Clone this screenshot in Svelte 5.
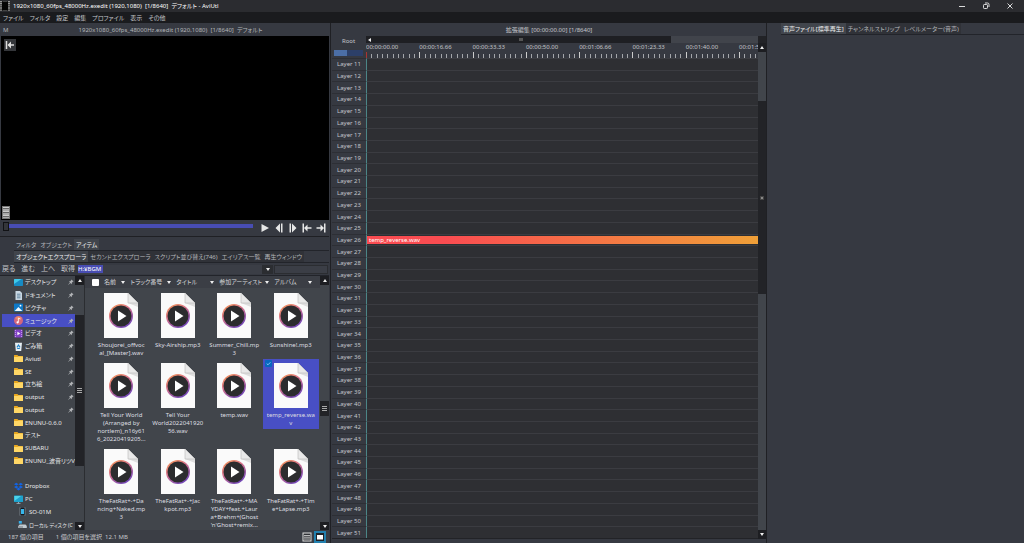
<script lang="ts">
	interface Place {
		name: string;
		icon: string;
		pinned?: boolean;
		child?: boolean;
	}

	const menus = ['ファイル', 'フィルタ', '設定', '編集', 'プロファイル', '表示', 'その他'];
	const topTabs = ['フィルタ', 'オブジェクト', 'アイテム'];
	const subTabs = ['オブジェクトエクスプローラ', 'セカンドエクスプローラ', 'スクリプト並び替え(746)', 'エイリアス一覧', '再生ウィンドウ'];
	const audioTabs = ['音声ファイル[標準再生]', 'チャンネルストリップ', 'レベルメーター(音声)'];
	const columns = ['名前', 'トラック番号', 'タイトル', '参加アーティスト', 'アルバム'];

	const places: Place[] = [
		{ name: 'デスクトップ', icon: 'desktop', pinned: true },
		{ name: 'ドキュメント', icon: 'document', pinned: true },
		{ name: 'ピクチャ', icon: 'picture', pinned: true },
		{ name: 'ミュージック', icon: 'music', pinned: true },
		{ name: 'ビデオ', icon: 'video', pinned: true },
		{ name: 'ごみ箱', icon: 'trash', pinned: true },
		{ name: 'Aviutl', icon: 'folder', pinned: true },
		{ name: 'SE', icon: 'folder', pinned: true },
		{ name: '立ち絵', icon: 'folder', pinned: true },
		{ name: 'output', icon: 'folder', pinned: true },
		{ name: 'output', icon: 'folder', pinned: true },
		{ name: 'ENUNU-0.6.0', icon: 'folder' },
		{ name: 'テスト', icon: 'folder' },
		{ name: 'SUBARU', icon: 'folder' },
		{ name: 'ENUNU_波音リツV', icon: 'folder' },
		{ name: '', icon: '' },
		{ name: 'Dropbox', icon: 'dropbox' },
		{ name: 'PC', icon: 'pc' },
		{ name: 'SO-01M', icon: 'phone', child: true },
		{ name: 'ローカル ディスク (C', icon: 'disk', child: true }
	];

	// Names are stored already wrapped, one entry per line
	const files = [
		['Shoujorei_offvoc', 'al_[Master].wav'],
		['Sky-Airship.mp3'],
		['Summer_Chill.mp', '3'],
		['Sunshine!.mp3'],
		['Tell Your World', '(Arranged by', 'nortlem)_n16y61', '6_20220419205...'],
		['Tell Your', 'World2022041920', '56.wav'],
		['temp.wav'],
		['temp_reverse.wa', 'v'],
		['TheFatRat+-+Da', 'ncing+Naked.mp', '3'],
		['TheFatRat+-+Jac', 'kpot.mp3'],
		['TheFatRat+-+MA', 'YDAY+feat.+Laur', 'a+Brehm+(Ghost', "'n'Ghost+remix..."],
		['TheFatRat+-+Tim', 'e+Lapse.mp3']
	];

	const times = ['00:00:00.00', '00:00:16.66', '00:00:33.33', '00:00:50.00', '00:01:06.66', '00:01:23.33', '00:01:40.00', '00:01:5'];
	const layers = Array.from({ length: 41 }, (_, i) => i + 11);

	let topTab = $state(2);
	let subTab = $state(0);
	let audioTab = $state(0);
	let place = $state(3);
	let selected = $state(7);
	let frame = $state(0);
	let path = $state('H:¥BGM');
	let search = $state('');
	let allChecked = $state(false);
</script>

{#snippet placeIcon(kind: string)}
	<svg class="place-icon" viewBox="0 0 9 9" aria-hidden="true">
		{#if kind === 'folder'}
			<path d="M0 1.5Q0 1 .5 1H3.4L4.4 2H8.4Q9 2 9 2.6V7.5Q9 8 8.4 8H.6Q0 8 0 7.5Z" fill="#e9a820" />
			<path d="M0 3H3.6L4.6 2.6H9V7.5Q9 8 8.4 8H.6Q0 8 0 7.5Z" fill="#ffd766" />
		{:else if kind === 'desktop'}
			<rect y="1" width="9" height="7" rx=".7" fill="#168bc4" />
			<path d="M0 6 7.5 1H.7Q0 1 0 1.7Z" fill="#3fc9ea" />
		{:else if kind === 'document'}
			<path d="M1.5 0H6L8 2V9H1.5Z" fill="#c9d7e2" />
			<path d="M3 3.2H6.5M3 5H6.5M3 6.8H6.5" stroke="#5b7f9b" stroke-width=".9" />
		{:else if kind === 'picture'}
			<rect y=".5" width="9" height="8" rx=".7" fill="#0e79c6" />
			<path d="M.6 8 4.4 4 8.4 8Z" fill="#eef8ff" />
			<circle cx="6.5" cy="2.7" r=".9" fill="#fff" />
		{:else if kind === 'music'}
			<circle cx="4.5" cy="4.5" r="4.5" fill="#d4667c" />
			<path d="M1 2A4.5 4.5 0 0 1 8 2L4.5 5Z" fill="#ef8f68" opacity=".8" />
			<path d="M4.4 6.3V2L6.4 3" fill="none" stroke="#fff" stroke-width=".8" />
			<circle cx="3.6" cy="6.3" r="1.1" fill="#fff" />
		{:else if kind === 'video'}
			<rect x=".5" y=".5" width="8" height="8" rx=".6" fill="#8142c5" />
			<path d="M1.4 1V8M7.6 1V8" stroke="#d2aaf6" stroke-width=".9" stroke-dasharray="1 1" />
			<path d="M3.4 2.7 6.3 4.5 3.4 6.3Z" fill="#fff" />
		{:else if kind === 'trash'}
			<path d="M1 .7H8L7.2 9H1.8Z" fill="#e5edf2" />
			<path d="M3 5.4 4.5 3 6 5.4M3.2 6.5H5.8" fill="none" stroke="#1b80c9" stroke-width="1.1" />
		{:else if kind === 'dropbox'}
			<path d="M2.3 .8 4.5 2.2 2.3 3.6 0 2.2ZM6.7 .8 9 2.2 6.7 3.6 4.5 2.2ZM2.3 3.8 4.5 5.1 2.3 6.5 0 5.1ZM6.7 3.8 9 5.1 6.7 6.5 4.5 5.1ZM4.5 5.7 6.7 7.1 4.5 8.5 2.3 7.1Z" fill="#1264e5" />
		{:else if kind === 'pc'}
			<rect y=".6" width="9" height="6.4" rx=".5" fill="#1ca1cc" />
			<path d="M.4 6 7 1H.4Z" fill="#4dd3e9" />
			<path d="M4.5 7V8.4M2.5 8.4H6.5" stroke="#a9bfcc" stroke-width=".8" />
		{:else if kind === 'phone'}
			<rect x="2" width="5" height="9" rx=".8" fill="#101820" stroke="#a5b5c1" stroke-width=".5" />
			<rect x="3" y="2" width="3" height="5" fill="#37b6ea" />
		{:else if kind === 'disk'}
			<path d="M.8 1H3.8V3.6H.8Z" fill="#35b0ec" />
			<path d="M.3 6 1.6 4.4H7.5L8.8 6V8H.3Z" fill="#c2cbd1" />
			<path d="M1 7H5" stroke="#4a5258" stroke-width=".7" />
		{/if}
	</svg>
{/snippet}

<div class="app">
	<header class="titlebar">
		<svg class="app-icon" viewBox="0 0 10 10" aria-hidden="true">
			<rect width="10" height="10" fill="#050505" />
			<path d="M1 0V10M9 0V10" stroke="#d8d8d8" stroke-width="1.4" stroke-dasharray="1.4 .7" />
			<path d="M2.5 .4H7.5M2.5 9.6H7.5" stroke="#777" stroke-width=".6" />
		</svg>
		<h1>1920x1080_60fps_48000Hz.exedit (1920,1080)&nbsp; [1/8640]&nbsp; デフォルト - AviUtl</h1>
		<div class="window-buttons">
			<button aria-label="最小化"><svg viewBox="0 0 8 8"><path d="M1 4.5H7" /></svg></button>
			<button aria-label="元に戻す">
				<svg viewBox="0 0 8 8"><rect x="1.5" y="2.5" width="4" height="4" rx=".8" /><path d="M3 1H5.5Q7 1 7 2.5V5" /></svg>
			</button>
			<button aria-label="閉じる"><svg viewBox="0 0 8 8"><path d="M1.5 1.5 6.5 6.5M6.5 1.5 1.5 6.5" /></svg></button>
		</div>
	</header>

	<nav class="menubar">
		{#each menus as menu}
			<button>{menu}</button>
		{/each}
	</nav>

	<main class="workspace">
		<section class="left-pane">
			<div class="pane-title">
				<span class="mode">M</span>
				<span>1920x1080_60fps_48000Hz.exedit (1920,1080)&nbsp; [1/8640]&nbsp; デフォルト</span>
			</div>

			<div class="preview">
				<button class="preview-back" aria-label="先頭へ">
					<svg viewBox="0 0 12 12"><path d="M2.5 2V10M10 6H4.5" stroke="#ddd" stroke-width="1.5" /><path d="M3.5 6 7 2.5V9.5Z" fill="#ddd" /></svg>
				</button>
				<span class="preview-meter"></span>
			</div>

			<div class="transport">
				<label class="seek">
					<input type="range" min="0" max="8640" bind:value={frame} aria-label="再生位置" />
				</label>
				<div class="transport-buttons">
					<button aria-label="再生"><svg viewBox="0 0 10 10"><path d="M1.5 1 9 5 1.5 9Z" /></svg></button>
					<button aria-label="前のフレーム"><svg viewBox="0 0 10 10"><path d="M6 .5V9.5L1.5 5ZM7 .5H8.5V9.5H7Z" /></svg></button>
					<button aria-label="次のフレーム"><svg viewBox="0 0 10 10"><path d="M4 .5V9.5L8.5 5ZM1.5 .5H3V9.5H1.5Z" /></svg></button>
					<button aria-label="先頭"><svg viewBox="0 0 10 10"><path d="M.5 .5H2V9.5H.5ZM2 5 5.5 1.5V4.3H9.5V5.7H5.5V8.5Z" /></svg></button>
					<button aria-label="末尾"><svg viewBox="0 0 10 10"><path d="M8 .5H9.5V9.5H8ZM8 5 4.5 1.5V4.3H.5V5.7H4.5V8.5Z" /></svg></button>
				</div>
			</div>

			<div class="tabs upper">
				{#each topTabs as tab, i}
					<button class:active={topTab === i} onclick={() => (topTab = i)}>{tab}</button>
				{/each}
			</div>
			<div class="tabs sub">
				{#each subTabs as tab, i}
					<button class:active={subTab === i} onclick={() => (subTab = i)}>{tab}</button>
				{/each}
			</div>

			<div class="address">
				<button>戻る</button>
				<button>進む</button>
				<button>上へ</button>
				<button>取得</button>
				<div class="path">
					<span class="path-value"><input bind:value={path} aria-label="パス" /></span>
					<button class="drop" aria-label="履歴"><span class="arrow down"></span></button>
				</div>
				<input class="search" bind:value={search} aria-label="検索" />
			</div>

			<div class="explorer">
				<nav class="places">
					{#each places as item, i}
						{#if item.name}
							<button class="place" class:active={place === i} class:child={item.child} onclick={() => (place = i)}>
								{@render placeIcon(item.icon)}
								<span class="place-name" class:small={item.icon === 'disk'}>{item.name}</span>
								{#if item.pinned}
									<svg class="pin" viewBox="0 0 7 7" aria-hidden="true"><path d="M4 .5 6.5 3 5.6 3.3 4.5 4.4 4.3 6 2.7 4.6.6 6.6.3 6.3 2.3 4.2 1 2.8 2.6 2.5 3.7 1.4Z" /></svg>
								{/if}
							</button>
						{:else}
							<span></span>
						{/if}
					{/each}
				</nav>
				<div class="vscroll places-scroll">
					<span class="cap"><span class="arrow up"></span></span>
					<span class="thumb"></span>
					<span class="track"><span class="grip"></span></span>
					<span class="thumb"></span>
					<span class="cap"><span class="arrow down"></span></span>
				</div>

				<div class="listing">
					<div class="columns">
						<input type="checkbox" bind:checked={allChecked} aria-label="すべて選択" />
						{#each columns as column}
							<button>{column}<span class="arrow down"></span></button>
						{/each}
					</div>
					<div class="files">
						{#each files as lines, i}
							<button class="file" class:selected={selected === i} onclick={() => (selected = i)}>
								{#if selected === i}
									<svg class="check" viewBox="0 0 7 7" aria-hidden="true">
										<rect width="7" height="7" rx="1" fill="#0868bf" />
										<path d="M1.7 3.6 3 4.8 5.4 2.3" fill="none" stroke="#a7dcff" stroke-width=".8" />
									</svg>
								{/if}
								<svg class="file-icon" viewBox="0 0 34 45" aria-hidden="true">
									<defs>
										<linearGradient id="ring{i}" x1="0" y1="0" x2=".6" y2="1">
											<stop offset="0" stop-color="#f79a4c" />
											<stop offset=".45" stop-color="#d9748a" />
											<stop offset="1" stop-color="#7548b8" />
										</linearGradient>
									</defs>
									<path d="M0 0H24L34 10V45H0Z" fill="#fafafa" />
									<path d="M24 0 34 10V14L24 10Z" fill="#dedede" />
									<path d="M24 0V10H34Z" fill="#e9e9e9" stroke="#bbb" stroke-width=".6" />
									<circle cx="17" cy="23" r="12" fill="url(#ring{i})" />
									<circle cx="17" cy="23" r="10.5" fill="#2c2c2e" />
									<path d="M14 17.5 22.5 23 14 28.5Z" fill="#fff" />
								</svg>
								<span class="file-name">
									{#each lines as line}
										<span>{line}</span>
									{/each}
								</span>
							</button>
						{/each}
					</div>
				</div>
				<div class="vscroll files-scroll">
					<span class="cap"><span class="arrow up"></span></span>
					<span class="thumb"></span>
					<span class="track"><span class="grip"></span></span>
					<span class="thumb"></span>
					<span class="cap"><span class="arrow down"></span></span>
				</div>
			</div>

			<footer class="status">
				<span>187 個の項目</span>
				<span>1 個の項目を選択&nbsp; 12.1 MB</span>
				<div class="views">
					<button aria-label="詳細"><svg viewBox="0 0 10 10"><rect x="1" y="1" width="8" height="8" fill="#303237" stroke="#ddd" /><path d="M2 3.5H8M2 5.2H8M2 7H8" stroke="#ddd" stroke-width=".8" /></svg></button>
					<button class="active" aria-label="大アイコン"><svg viewBox="0 0 10 10"><rect x="1" y="1" width="8" height="8" fill="#202227" /><rect x="2" y="3" width="6" height="4.5" fill="#fff" /></svg></button>
				</div>
			</footer>
		</section>

		<section class="timeline">
			<div class="timeline-title">拡張編集 [00:00:00.00] [1/8640]</div>
			<div class="timeline-head">
				<div class="root">
					<button>Root</button>
					<span class="zoom"><span></span></span>
				</div>
				<div class="ruler">
					<div class="hscroll">
						<span class="arrow left"></span>
						<span class="hgrip"></span>
						<span class="hthumb"></span>
						<span class="arrow right"></span>
					</div>
					<div class="scale">
						{#each times as time}
							<div class="mark">
								<span>{time}</span>
								<div class="ticks">
									{#each Array(10) as _}
										<i></i>
									{/each}
								</div>
							</div>
						{/each}
					</div>
				</div>
			</div>
			<div class="layers">
				{#each layers as layer}
					<div class="layer">
						<button class="layer-name">Layer {layer}</button>
						<div class="lane">
							{#if layer === 26}
								<button class="clip">temp_reverse.wav</button>
							{/if}
						</div>
					</div>
				{/each}
			</div>
			<div class="vscroll layers-scroll">
				<span class="cap"><span class="arrow up"></span></span>
				<span class="thumb"></span>
				<span class="track"><span class="dot"></span></span>
				<span class="thumb lower"></span>
				<span class="cap"><span class="arrow down"></span></span>
			</div>
		</section>

		<aside class="audio">
			<div class="tabs">
				{#each audioTabs as tab, i}
					<button class:active={audioTab === i} onclick={() => (audioTab = i)}>{tab}</button>
				{/each}
			</div>
		</aside>
	</main>
</div>

<style>
	:global(body) {
		background: #363941;
	}

	.app {
		display: flex;
		flex-direction: column;
		height: 100vh;
		overflow: hidden;
		background: #363941;
		color: #c4c6ca;
		font-family: 'Noto Sans', 'Noto Sans CJK JP', sans-serif;
		font-size: 6px;
		line-height: 8px;
		font-feature-settings: 'palt';
	}

	.app * {
		box-sizing: border-box;
	}

	button,
	input {
		margin: 0;
		padding: 0;
		border: 0;
		background: none;
		color: inherit;
		font: inherit;
		font-feature-settings: inherit;
	}

	button {
		white-space: nowrap;
	}

	svg {
		display: block;
		flex-shrink: 0;
	}

	.arrow {
		display: block;
		flex-shrink: 0;
		width: 0;
		height: 0;
		border: 2px solid transparent;
	}

	.arrow.up {
		border-top: 0;
		border-bottom: 3px solid #eee;
	}

	.arrow.down {
		border-bottom: 0;
		border-top: 3px solid #eee;
	}

	.arrow.left {
		border-left: 0;
		border-right: 3px solid #eee;
	}

	.arrow.right {
		border-right: 0;
		border-left: 3px solid #eee;
	}

	.titlebar {
		display: flex;
		align-items: center;
		gap: 3px;
		height: 12px;
		flex-shrink: 0;
		background: #2b2c30;
		color: #fff;
	}

	.app-icon {
		width: 10px;
		height: 10px;
	}

	h1 {
		margin: 0;
		font-size: 6px;
		font-weight: 400;
		white-space: nowrap;
	}

	.window-buttons {
		display: flex;
		margin-left: auto;
		gap: 16px;
		padding-right: 10px;
	}

	.window-buttons svg {
		width: 8px;
		height: 8px;
		fill: none;
		stroke: #eee;
		stroke-width: 0.9;
	}

	.menubar {
		display: flex;
		align-items: center;
		gap: 6px;
		height: 11px;
		flex-shrink: 0;
		padding-left: 3px;
		background: #1a1b1e;
	}

	.workspace {
		display: grid;
		grid-template-columns: minmax(0, 331fr) minmax(0, 436fr) minmax(0, 257fr);
		flex: 1;
		min-height: 0;
	}

	.left-pane {
		display: flex;
		flex-direction: column;
		min-height: 0;
		padding-right: 1px;
		border-right: 1px solid #1f2024;
	}

	.pane-title {
		display: grid;
		grid-template-columns: 12px 1fr;
		align-items: center;
		height: 13px;
		flex-shrink: 0;
		padding: 0 3px;
		color: #b4b6ba;
		text-align: center;
	}

	.mode {
		text-align: left;
	}

	.preview {
		display: flex;
		flex-direction: column;
		align-items: flex-start;
		justify-content: space-between;
		flex: 1;
		min-height: 0;
		margin-left: 1px;
		padding: 3px 3px 1px 1px;
		background: #000;
	}

	.preview-back {
		margin-left: 2px;
		background: #34363a;
	}

	.preview-back svg {
		width: 12px;
		height: 12px;
	}

	.preview-meter {
		width: 8px;
		height: 13px;
		border: 1px solid #777;
		background: repeating-linear-gradient(#ccc 0 1px, #666 1px 2px, #aaa 2px 4px);
	}

	.transport {
		display: flex;
		align-items: center;
		gap: 7px;
		height: 17px;
		flex-shrink: 0;
		padding: 0 3px;
		border-bottom: 1px solid #1f2024;
	}

	.seek {
		display: flex;
		align-self: flex-start;
		flex: 1;
		padding-top: 1px;
	}

	.seek input {
		appearance: none;
		width: 100%;
		height: 10px;
		background: linear-gradient(#484db3, #484db3) center / 100% 4px no-repeat;
	}

	.seek input::-webkit-slider-thumb {
		appearance: none;
		width: 6px;
		height: 9px;
		border: 1px solid #111215;
		background: #34363a;
	}

	.transport-buttons {
		display: flex;
		gap: 4px;
	}

	.transport-buttons svg {
		width: 10px;
		height: 10px;
		fill: #e6e6e6;
	}

	.tabs {
		display: flex;
		align-items: stretch;
		height: 12px;
		flex-shrink: 0;
		margin-left: 14px;
		border-bottom: 1px solid #22242a;
		color: #b4b6ba;
	}

	.tabs button {
		padding: 0 2px;
		background: #303238;
	}

	.tabs .active {
		background: #41454c;
		color: #eee;
	}

	.upper {
		margin-top: 2px;
	}

	.upper button {
		background: none;
	}

	.address {
		display: flex;
		align-items: center;
		gap: 6px;
		height: 12px;
		flex-shrink: 0;
		padding: 0 1px 0 2px;
		font-size: 7px;
	}

	.path {
		display: flex;
		flex: 1;
		align-items: center;
		height: 9px;
		margin-left: -3px;
		background: #3b3e46;
	}

	.path-value {
		flex: 1;
		display: flex;
	}

	.path-value input {
		width: 25px;
		background: #484db3;
		color: #fff;
		font-size: 6px;
	}

	.drop {
		display: flex;
		align-items: center;
		justify-content: center;
		width: 11px;
		height: 9px;
		background: #2b2d31;
	}

	.search {
		width: 54px;
		height: 9px;
		margin-left: -5px;
		border: 1px solid #2b2d31;
		background: #3b3e46;
	}

	.explorer {
		display: grid;
		grid-template-columns: 75px 9px minmax(0, 1fr) 9px;
		height: 255px;
		flex-shrink: 0;
		border-top: 1px solid #22242a;
		background: #41454b;
	}

	.places {
		display: grid;
		grid-template-rows: repeat(20, minmax(0, 1fr));
		margin-left: 2px;
		overflow: hidden;
	}

	.place {
		display: flex;
		align-items: center;
		gap: 2px;
		padding: 0 1px 0 12px;
		text-align: left;
		color: #e6e7e9;
		overflow: hidden;
	}

	.place.child {
		padding-left: 16px;
	}

	.place.active {
		background: #484fc4;
	}

	.place-icon {
		width: 9px;
		height: 9px;
	}

	.place-name {
		flex: 1;
	}

	.place-name.small {
		font-size: 5px;
	}

	.pin {
		width: 6px;
		height: 6px;
		fill: #b3b5b8;
	}

	.vscroll {
		display: flex;
		flex-direction: column;
		background: #222327;
	}

	.cap {
		display: flex;
		align-items: center;
		justify-content: center;
		height: 9px;
		flex-shrink: 0;
		background: #1d1e22;
	}

	.thumb {
		background: #41454b;
	}

	.track {
		display: flex;
		align-items: center;
		justify-content: center;
		background: #222327;
	}

	.grip {
		width: 5px;
		height: 5px;
		border: solid #aaa;
		border-width: 1px 0;
		background: linear-gradient(#222327 1px, #aaa 1px 2px, #222327 2px);
	}

	.places-scroll .thumb:nth-child(2) {
		flex: 30;
	}

	.places-scroll .track {
		flex: 150;
	}

	.places-scroll .thumb:nth-child(4) {
		flex: 56;
	}

	.files-scroll .thumb:nth-child(2) {
		flex: 116;
	}

	.files-scroll .track {
		flex: 14;
	}

	.files-scroll .thumb:nth-child(4) {
		flex: 106;
	}

	.listing {
		min-width: 0;
		border-left: 1px solid #2b2d31;
	}

	.columns {
		display: grid;
		grid-template-columns: 7px 21fr 40fr 37fr 49fr 37fr;
		align-items: center;
		gap: 5px;
		height: 12px;
		padding: 0 8px 0 7px;
		background: #3b3e45;
		color: #d5d6d8;
	}

	.columns button {
		display: flex;
		align-items: center;
		justify-content: space-between;
		min-width: 0;
	}

	.columns input {
		appearance: none;
		width: 7px;
		height: 7px;
		border-radius: 1px;
		background: #fff;
	}

	.files {
		display: grid;
		grid-template-columns: repeat(4, minmax(0, 1fr));
		justify-items: center;
		align-items: start;
		margin: 0 1px 0 8px;
		padding-top: 1px;
	}

	.file {
		position: relative;
		display: flex;
		flex-direction: column;
		align-items: center;
		gap: 3px;
		width: 100%;
		padding: 4px 0 2px;
		color: #dedfe1;
	}

	.file.selected {
		background: #484fc4;
	}

	.file-icon {
		width: 34px;
		height: 45px;
	}

	.file-name {
		display: flex;
		flex-direction: column;
		align-items: center;
	}

	.check {
		position: absolute;
		top: 1px;
		left: 2px;
		width: 7px;
		height: 7px;
	}

	.status {
		display: flex;
		align-items: center;
		gap: 12px;
		height: 13px;
		flex-shrink: 0;
		padding-left: 8px;
		background: #3b3e45;
	}

	.views {
		display: flex;
		gap: 1px;
		margin-left: auto;
		padding-right: 3px;
	}

	.views button {
		padding: 1px;
	}

	.views svg {
		width: 10px;
		height: 10px;
	}

	.views .active {
		background: #2380ae;
	}

	.timeline {
		display: grid;
		grid-template-columns: minmax(0, 1fr) 8px;
		grid-template-rows: 13px 22px minmax(0, 1fr);
		min-height: 0;
		padding: 0 0 4px 1px;
		border-right: 1px solid #1f2024;
	}

	.timeline-title {
		grid-column: 1 / 3;
		align-self: center;
		text-align: center;
		color: #c4c6ca;
	}

	.timeline-head {
		display: grid;
		grid-column: 1 / 3;
		grid-row: 2;
		grid-template-columns: 34px minmax(0, 1fr);
	}

	.root {
		display: flex;
		flex-direction: column;
		justify-content: space-between;
		padding: 1px 3px 2px 2px;
	}

	.zoom {
		height: 6px;
		background: #2c3f68;
	}

	.zoom span {
		display: block;
		width: 45%;
		height: 6px;
		background: #4b6ea6;
	}

	.ruler {
		display: flex;
		flex-direction: column;
		min-width: 0;
	}

	.hscroll {
		display: grid;
		grid-template-columns: 3px 300fr 90fr 3px;
		align-items: center;
		height: 7px;
		padding: 0 2px;
		background: #1e1f23;
	}

	.hgrip {
		width: 4px;
		height: 3px;
		justify-self: center;
		background: #555;
	}

	.hthumb {
		height: 7px;
		margin-right: 3px;
		background: #41444b;
	}

	.scale {
		display: grid;
		grid-template-columns: repeat(8, 13.6%);
		flex: 1;
		margin-right: 8px;
		overflow: hidden;
	}

	.mark {
		display: flex;
		flex-direction: column;
		justify-content: space-between;
	}

	.ticks {
		display: grid;
		grid-template-columns: repeat(10, 1fr);
		align-items: end;
	}

	.ticks i {
		width: 1px;
		height: 4px;
		background: #a4a6aa;
	}

	.ticks i:first-child {
		height: 6px;
		background: #ccc;
	}

	.mark:first-child i:first-child {
		background: #a33;
	}

	.layers {
		display: grid;
		grid-column: 1;
		grid-row: 3;
		grid-template-rows: repeat(41, minmax(0, 1fr));
		border-bottom: 1px solid #222327;
	}

	.layer {
		display: grid;
		grid-template-columns: 34px minmax(0, 1fr);
		min-height: 0;
	}

	.layer-name {
		border-top: 1px solid #2d2f35;
		background: #363941;
		color: #c4c6ca;
	}

	.lane {
		display: flex;
		border-top: 1px solid #3b3c41;
		border-left: 1px solid #4c8587;
		background: #2e2f33;
	}

	.clip {
		flex: 1;
		margin: 1px 0;
		padding-left: 2px;
		background: linear-gradient(90deg, #fa4c51 20%, #f0a038);
		color: #fff;
		line-height: 8px;
		text-align: left;
	}

	.layers-scroll {
		grid-column: 2;
		grid-row: 2 / 4;
		padding-top: 7px;
	}

	.layers-scroll .thumb {
		flex: 49;
	}

	.layers-scroll .track {
		flex: 194;
	}

	.layers-scroll .lower {
		flex: 236;
	}

	.dot {
		width: 4px;
		height: 4px;
		border: 1px solid #444;
		background: #888;
	}

	.audio {
		min-width: 0;
	}
</style>
